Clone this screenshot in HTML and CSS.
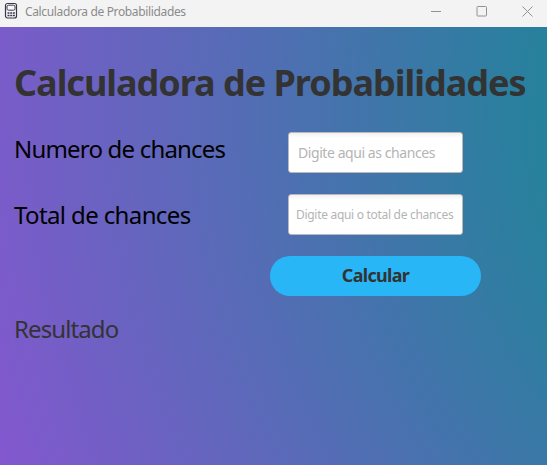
FILE: index.html
```
<!DOCTYPE html>
<html lang="pt-BR">
<head>
<meta charset="utf-8">
<title>Calculadora de Probabilidades</title>
<link rel="stylesheet" href="styles.css">
</head>
<body>
<header class="titlebar">
  <svg class="app-icon" width="14" height="18" viewBox="0 0 14 18" fill="none">
    <rect x="1.5" y="1.5" width="11" height="14.5" rx="2" fill="#f8f8fa" stroke="#393747" stroke-width="1.2"/>
    <rect x="3" y="3.2" width="8" height="5" rx="1.5" stroke="#393747"/>
    <path d="M3.5 11h2M6.2 11h2M8.9 11h2M3.5 13.5h2M6.2 13.5h2M8.9 13.5h2" stroke="#393747" stroke-width="1.7"/>
  </svg>
  <span class="window-title">Calculadora de Probabilidades</span>
  <div class="controls">
    <svg width="11" height="11" viewBox="0 0 11 11"><path d="M1 5.5h10"/></svg>
    <svg width="11" height="11" viewBox="0 0 11 11"><rect x="1" y=".5" width="9.5" height="9.5" rx=".8"/></svg>
    <svg width="11" height="11" viewBox="0 0 11 11"><path d="M.5.5l10 10M10.5.5l-10 10"/></svg>
  </div>
</header>
<main class="panel">
  <h1 class="heading">Calculadora de Probabilidades</h1>
  <form class="form">
    <label class="label" for="chances">Numero de chances</label>
    <input class="field" id="chances" type="text" placeholder="Digite aqui as chances">
    <label class="label label-total" for="total">Total de chances</label>
    <input class="field field-small" id="total" type="text" placeholder="Digite aqui o total de chances">
    <button class="submit" type="button">Calcular</button>
  </form>
  <p class="result">Resultado</p>
</main>
</body>
</html>
```
FILE: styles.css
```
* { box-sizing: border-box; }
body {
  margin: 0;
  height: 465px;
  display: flex;
  flex-direction: column;
  overflow: hidden;
  font-family: "Noto Sans", "Open Sans", sans-serif;
}
.titlebar {
  height: 27px;
  flex: none;
  display: flex;
  align-items: flex-start;
  padding: 2px 14px 0 4px;
  background: #f3f3f3;
}
.app-icon { flex: none; }
.window-title {
  margin-left: 7px;
  font-size: 12px;
  line-height: 20px;
  letter-spacing: -0.35px;
  color: #8b8b8b;
  white-space: nowrap;
}
.controls {
  margin-left: auto;
  padding-top: 4px;
  display: flex;
  gap: 35px;
}
.controls svg {
  fill: none;
  stroke: #929292;
  stroke-width: 1;
}
.panel {
  flex: 1;
  padding: 32px 14px 0;
  background: radial-gradient(circle at 930px 83px, #24829b 376px, #8457cf 1000px);
}
.heading {
  margin: 0;
  font-size: 36px;
  line-height: 48px;
  letter-spacing: -1.02px;
  color: #333;
  white-space: nowrap;
}
.form {
  margin-top: 25px;
  display: grid;
  grid-template-columns: 256px 211px;
  grid-template-rows: 41px 41px 40px;
  row-gap: 21px;
}
.label {
  font-size: 24px;
  line-height: 34px;
  letter-spacing: -0.81px;
  color: #000;
  white-space: nowrap;
}
.label-total {
  padding-top: 4px;
  letter-spacing: -0.62px;
}
.field {
  width: 175px;
  height: 41px;
  margin: 0;
  justify-self: center;
  padding: 0 9px;
  border: 1px solid #bbb8bd;
  border-radius: 3px;
  background: linear-gradient(#f1f1f1, #fff 5px);
  font-family: inherit;
  font-size: 14px;
  letter-spacing: -0.43px;
}
.field-small {
  padding: 0 7px;
  font-size: 12px;
  letter-spacing: -0.3px;
}
.field::placeholder { color: #b4b4b4; opacity: 1; }
.submit {
  grid-column: 2;
  height: 40px;
  padding: 0 0 2px;
  border: 0;
  border-radius: 20px;
  background: #29b6f6;
  color: #333;
  font-family: inherit;
  font-size: 18px;
  font-weight: 700;
  letter-spacing: -0.7px;
}
.result {
  margin: 16px 0 0;
  font-size: 24px;
  line-height: 34px;
  letter-spacing: -0.9px;
  color: #333;
}
```
